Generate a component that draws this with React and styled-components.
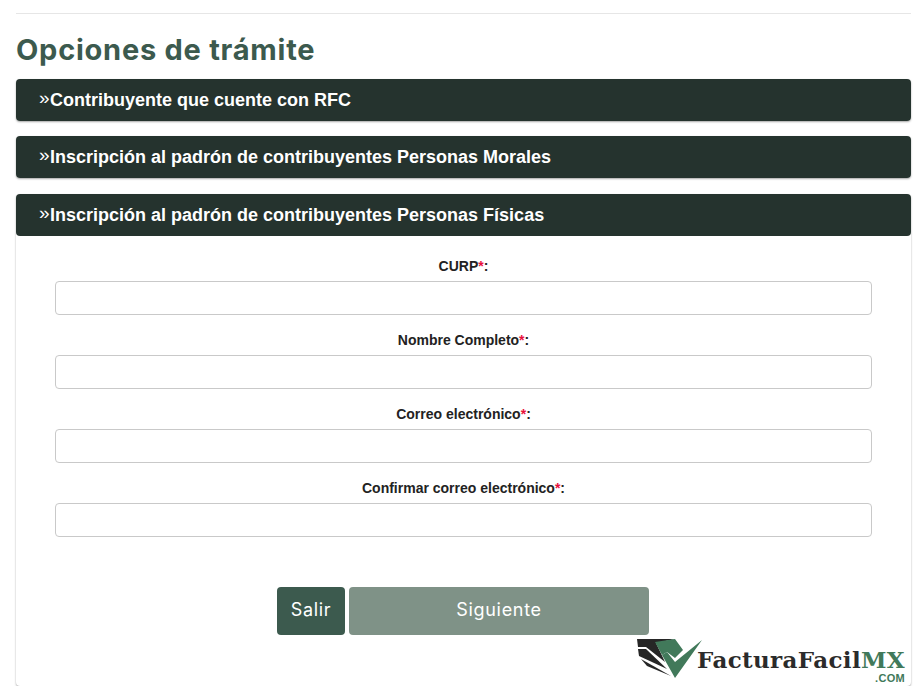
import React from 'react';
import styled, { createGlobalStyle } from 'styled-components';

const GlobalStyle = createGlobalStyle`
  html, body {
    margin: 0;
    padding: 0;
    background: #fff;
    font-family: "Liberation Sans", Arial, sans-serif;
  }
`;

const Page = styled.div`
  padding: 13px 10px 0 16px;
`;

const Rule = styled.hr`
  margin: 0;
  border: 0;
  border-top: 1px solid #e6e6e6;
`;

const Title = styled.h1`
  margin: 19px 0 13px;
  font-family: Inter, sans-serif;
  font-size: 29px;
  line-height: 33px;
  font-weight: 700;
  letter-spacing: 0.75px;
  color: #3c5a4e;
`;

const Section = styled.section`
  margin-bottom: ${({ $gap }) => $gap}px;
  position: relative;
  border-radius: 4px;
  background: #fff;
  box-shadow: 0 1px 2px rgba(0, 0, 0, 0.35);
`;

const Header = styled.div`
  display: flex;
  align-items: center;
  height: 42px;
  padding-left: 23px;
  border-radius: 4px;
  background: #25332e;
  color: #fff;
  font-size: 18px;
  font-weight: 700;
`;

const Chevron = styled.span`
  width: 11px;
  margin-top: -6px;
  font-size: 19px;
  font-weight: 400;
  line-height: 1;
`;

const Body = styled.div`
  box-sizing: border-box;
  height: 450px;
  padding: 22px 39px 0;
`;

const Field = styled.div`
  display: flex;
  flex-direction: column;
  align-items: center;
  margin-bottom: 17px;
`;

const Label = styled.label`
  margin-bottom: 7px;
  font-size: 14px;
  line-height: 16px;
  font-weight: 700;
  color: #222;
`;

const Star = styled.span`
  color: #e8103c;
`;

const Input = styled.input`
  box-sizing: border-box;
  width: 100%;
  height: 34px;
  border: 1px solid #c9c9c9;
  border-radius: 4px;
  background: #fff;
`;

const Actions = styled.div`
  display: flex;
  justify-content: center;
  gap: 4px;
  margin-top: 50px;
  padding-right: 1px;
`;

const Button = styled.button`
  width: ${({ $wide }) => ($wide ? 300 : 68)}px;
  height: 48px;
  padding: 0 0 3px;
  border: 0;
  border-radius: 4px;
  background: ${({ $wide }) => ($wide ? '#7f9287' : '#3c5a4e')};
  color: #fff;
  font-family: Inter, sans-serif;
  font-size: 18px;
  letter-spacing: 0.7px;
`;

const Logo = styled.div`
  position: absolute;
  right: 6px;
  bottom: 0;
  display: flex;
  align-items: flex-start;
  height: 48px;
`;

const LogoText = styled.div`
  margin: 9px 0 0 -6px;
  display: flex;
  flex-direction: column;
  align-items: flex-end;
`;

const LogoName = styled.div`
  font-family: "DejaVu Serif", serif;
  font-size: 23px;
  line-height: 26px;
  font-weight: 700;
  letter-spacing: 0.35px;
  color: #2b2b2b;
  white-space: nowrap;
`;

const LogoMx = styled.span`
  color: #41795a;
`;

const LogoCom = styled.div`
  font-size: 11px;
  line-height: 10px;
  font-weight: 700;
  letter-spacing: 0.3px;
  color: #41795a;
`;

const LogoMark = () => (
  <svg width="66" height="42" viewBox="0 0 66 42">
    <path d="M0 1H38L19 5L28 24L9 9L1 9Z" fill="#262626" />
    <path d="M1 11H9L30 31L2 18Z" fill="#262626" />
    <path d="M4 21L34 38L10 28Z" fill="#262626" />
    <path d="M18 4L38 1L46 12L38 20L30 14L25 17Z" fill="#41795a" />
    <path d="M25 17L30 14L38 24L65 2L38 40Z" fill="#41795a" />
  </svg>
);

const fields = ['CURP', 'Nombre Completo', 'Correo electrónico', 'Confirmar correo electrónico'];

const App = () => {
  return (
    <Page>
      <GlobalStyle />
      <Rule />
      <Title>Opciones de trámite</Title>
      <Section $gap={15}>
        <Header><Chevron>»</Chevron>Contribuyente que cuente con RFC</Header>
      </Section>
      <Section $gap={16}>
        <Header><Chevron>»</Chevron>Inscripción al padrón de contribuyentes Personas Morales</Header>
      </Section>
      <Section $gap={0}>
        <Header><Chevron>»</Chevron>Inscripción al padrón de contribuyentes Personas Físicas</Header>
        <Body>
          {fields.map((name) => (
            <Field key={name}>
              <Label>{name}<Star>*</Star>:</Label>
              <Input type="text" />
            </Field>
          ))}
          <Actions>
            <Button>Salir</Button>
            <Button $wide>Siguiente</Button>
          </Actions>
        </Body>
        <Logo>
          <LogoMark />
          <LogoText>
            <LogoName>FacturaFacil<LogoMx>MX</LogoMx></LogoName>
            <LogoCom>.COM</LogoCom>
          </LogoText>
        </Logo>
      </Section>
    </Page>
  );
};

export default App;
